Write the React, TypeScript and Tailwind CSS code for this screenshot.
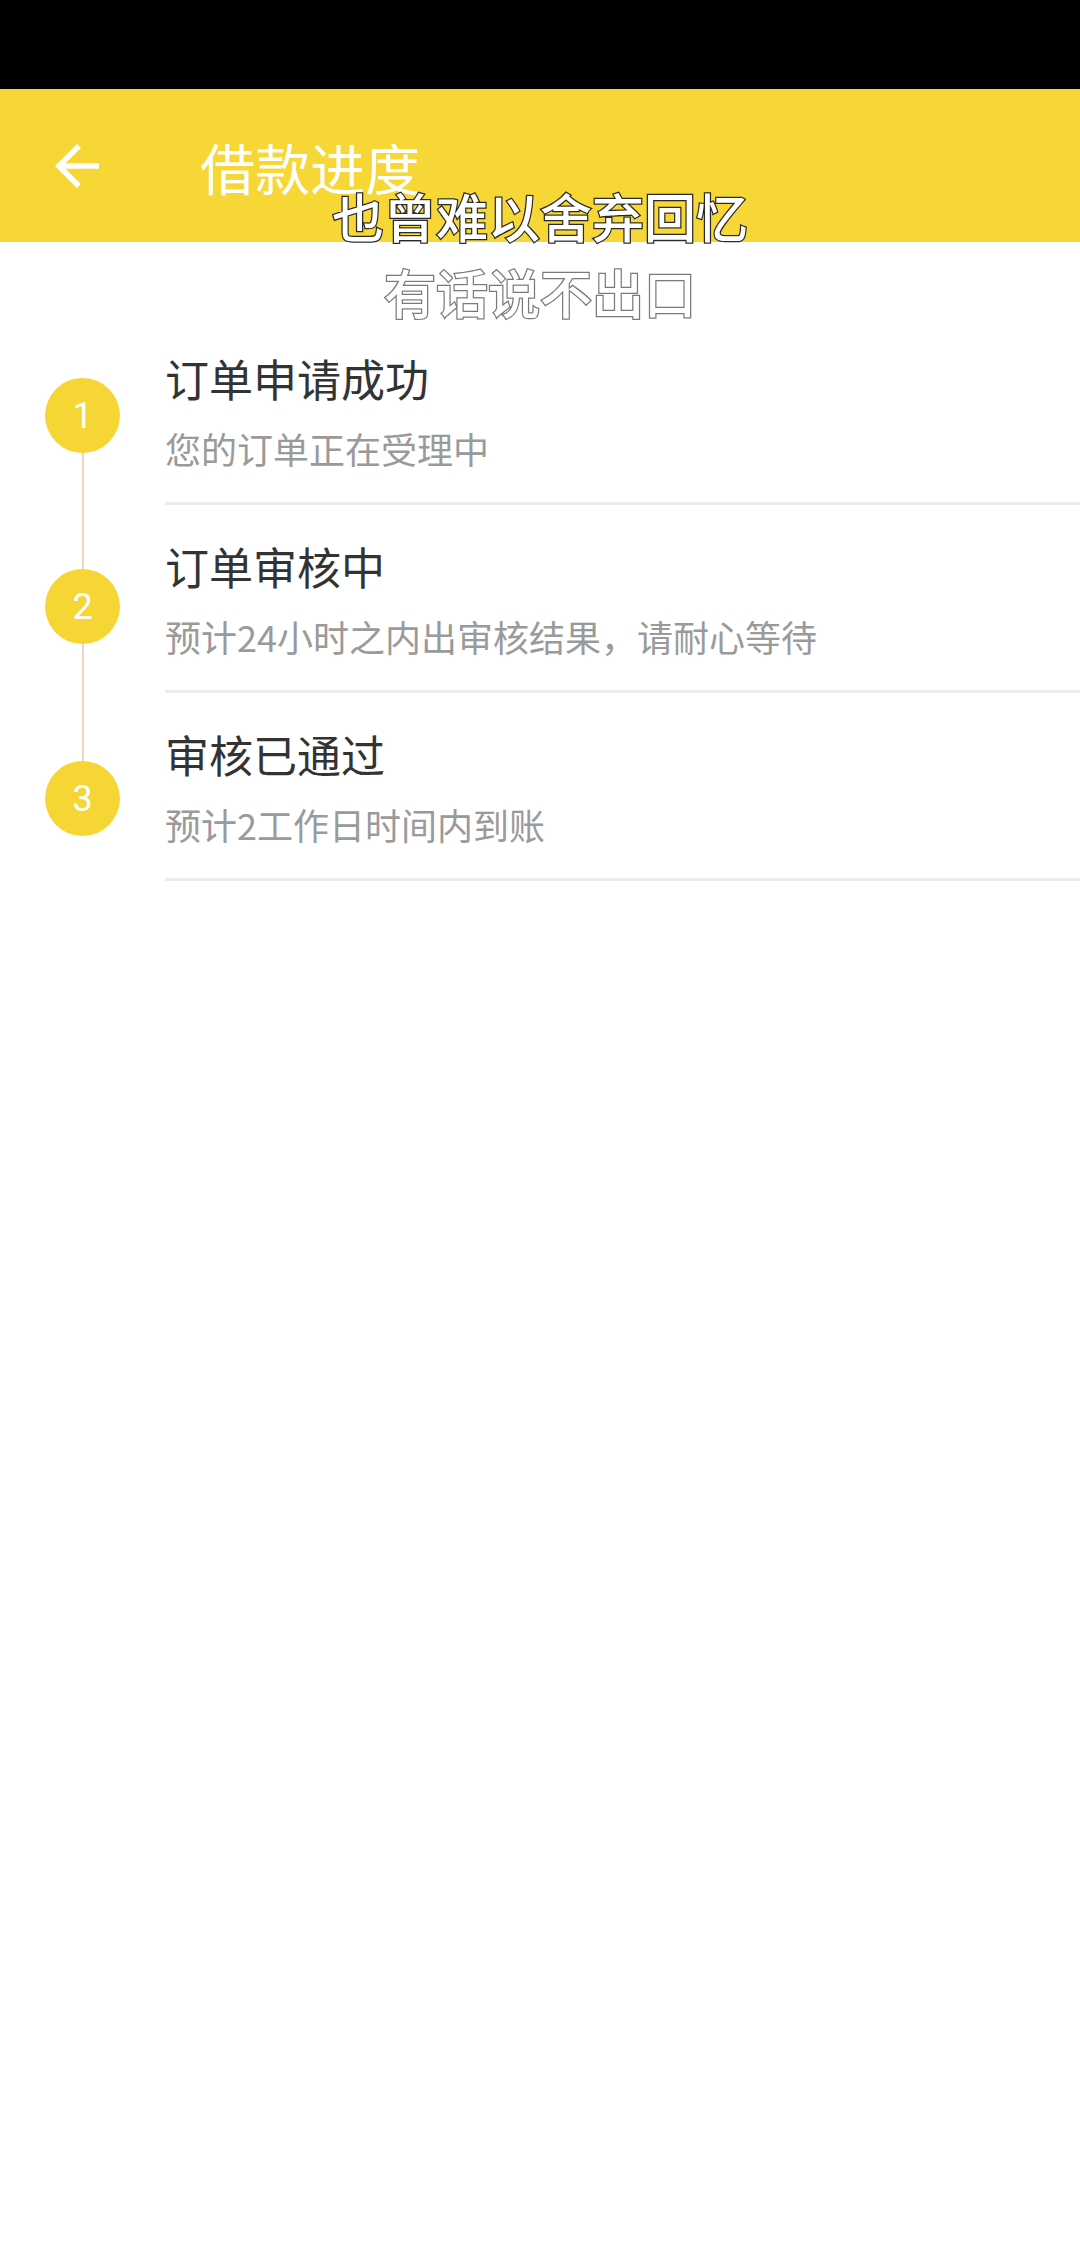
import React from 'react'

const STEPS = [
  { no: 1, title: '订单申请成功', desc: '您的订单正在受理中', top: 'h-[61px]' },
  { no: 2, title: '订单审核中', desc: '预计24小时之内出审核结果，请耐心等待', top: 'h-[64px]' },
  { no: 3, title: '审核已通过', desc: '预计2工作日时间内到账', top: 'h-[68px]' },
]

function BackArrow() {
  return (
    <svg width="66" height="66" viewBox="0 0 24 24" fill="#ffffff">
      <path d="M20 11H7.83l5.59-5.59L12 4l-8 8 8 8 1.41-1.41L7.83 13H20v-2z" />
    </svg>
  )
}

export default function App() {
  return (
    <div className="relative w-[1080px] min-h-[2248px] bg-white font-['Roboto','Noto_Sans_CJK_SC',sans-serif]">
      {/* 状态栏 */}
      <div className="h-[89px] bg-black" />

      {/* 标题栏 */}
      <div className="h-[153px] bg-[#f7d735] flex items-center">
        <div className="ml-[44px] w-[66px] h-[66px] flex items-center justify-center">
          <BackArrow />
        </div>
        <h1 className="ml-[90px] text-[55px] leading-[66px] text-white font-['Noto_Sans_CJK_SC',sans-serif]">借款进度</h1>
      </div>

      {/* 进度列表 */}
      <div className="mt-[75px]">
        {STEPS.map((s, i) => (
          <div key={s.no} className="flex h-[188px]">
            <div className="w-[165px] flex flex-col items-center shrink-0">
              <div className={`${s.top} w-[2px] ${i === 0 ? 'bg-transparent' : 'bg-[#f2d3c2]'}`} />
              <div className="w-[75px] h-[75px] rounded-full bg-[#f6d635] flex items-center justify-center text-white text-[36px] leading-none">
                {s.no}
              </div>
              <div className={`flex-1 w-[2px] ${i === STEPS.length - 1 ? 'bg-transparent' : 'bg-[#f2d3c2]'}`} />
            </div>
            <div className="flex-1 border-b-[3px] border-[#ececec] pt-[35px] font-['Noto_Sans_CJK_SC',sans-serif]">
              <div className="text-[44px] leading-[53px] text-[#333333]">{s.title}</div>
              <div className="mt-[22px] text-[36px] leading-[43px] text-[#9a9a9a]">{s.desc}</div>
            </div>
          </div>
        ))}
      </div>

      {/* 悬浮歌词 */}
      <div className="absolute left-0 right-0 top-[178px] text-center text-[52px] leading-[76px] font-medium text-white font-['Noto_Sans_CJK_SC',sans-serif] pointer-events-none">
        <div className="[-webkit-text-stroke:2.5px_#2a2a2a] [paint-order:stroke_fill]">也曾难以舍弃回忆</div>
        <div className="[-webkit-text-stroke:2.5px_#7a7a7a] [paint-order:stroke_fill]">有话说不出口</div>
      </div>
    </div>
  )
}
